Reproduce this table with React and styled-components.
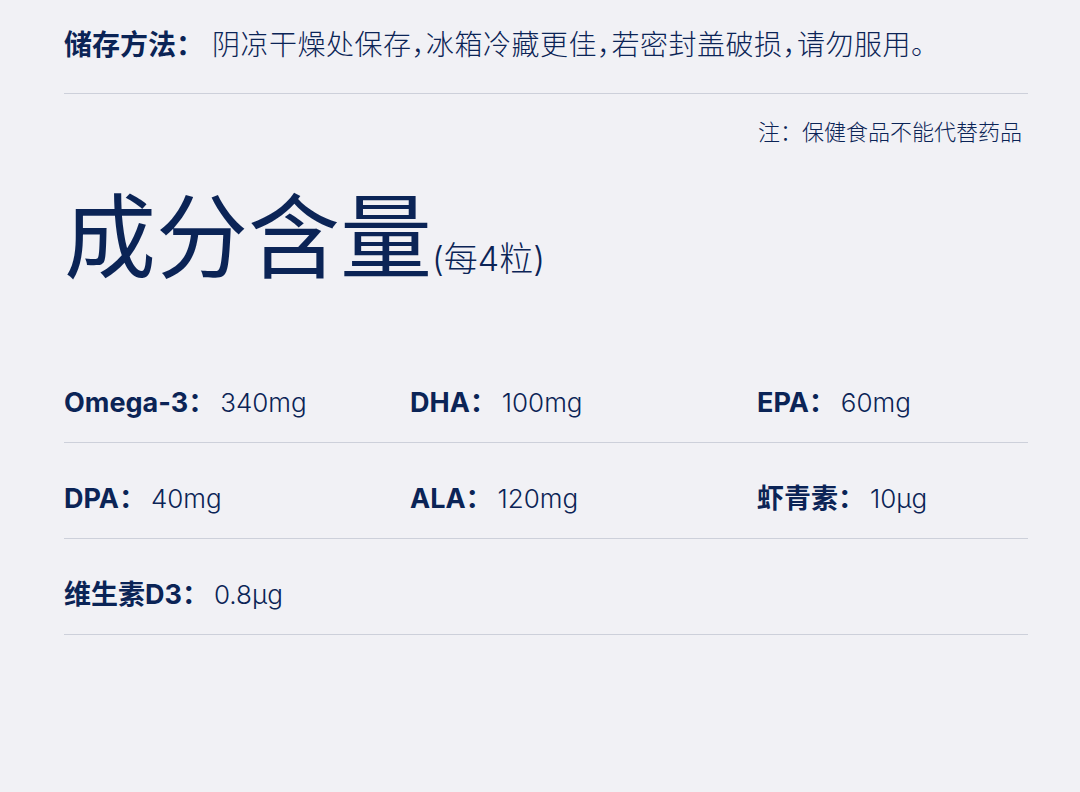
import React from "react";
import styled, { createGlobalStyle } from "styled-components";

const Global = createGlobalStyle`
  html, body { margin: 0; padding: 0; background: #f1f1f5; }
  body { font-family: Inter, "Noto Sans CJK SC", sans-serif; color: #0b2456; }
`;

const Page = styled.div`
  width: 1080px;
  min-height: 792px;
  box-sizing: border-box;
  padding: 0 52px 0 64px;
  background: #f1f1f5;
`;

const Storage = styled.div`
  display: flex;
  align-items: baseline;
  padding: 22px 0 29px;
  font-size: 28px;
  line-height: 42px;
  font-family: "Noto Sans CJK SC", sans-serif;
  border-bottom: 1px solid #cdd0da;
`;

const StorageLabel = styled.span`
  font-weight: 700;
  margin-right: 8px;
`;

const StorageText = styled.span`
  font-weight: 300;
  letter-spacing: 0.5px;
  font-feature-settings: "halt";
`;

const Note = styled.div`
  margin-top: 20px;
  text-align: right;
  font-size: 22px;
  line-height: 33px;
  font-weight: 300;
  font-family: "Noto Sans CJK SC", sans-serif;
  padding-right: 6px;
`;

const Title = styled.h1`
  margin: 38px 0 0;
  display: flex;
  align-items: baseline;
  font-weight: 400;
  font-size: 92px;
  line-height: 92px;
  font-family: "Noto Sans CJK SC", sans-serif;
`;

const TitleSub = styled.span`
  font-size: 34px;
  font-weight: 300;
  font-family: Inter, "Noto Sans CJK SC", sans-serif;
`;

const Table = styled.div`
  margin-top: 42px;
`;

const Row = styled.div`
  display: grid;
  grid-template-columns: 346px 347px 1fr;
  padding: 36px 0 20px;
  border-bottom: 1px solid #cdd0da;
`;

const Cell = styled.div`
  display: flex;
  align-items: baseline;
  font-size: 26px;
  line-height: 39px;
`;

const Label = styled.span`
  font-size: 27px;
  font-weight: 700;
  margin-right: 5px;
`;

const Value = styled.span`
  font-weight: 300;
`;

const rows = [
  [
    ["Omega-3：", "340mg"],
    ["DHA：", "100mg"],
    ["EPA：", "60mg"],
  ],
  [
    ["DPA：", "40mg"],
    ["ALA：", "120mg"],
    ["虾青素：", "10μg"],
  ],
  [["维生素D3：", "0.8μg"]],
];

export default function App() {
  return (
    <Page>
      <Global />
      <Storage>
        <StorageLabel>储存方法：</StorageLabel>
        <StorageText>阴凉干燥处保存，冰箱冷藏更佳，若密封盖破损，请勿服用。</StorageText>
      </Storage>
      <Note>注：保健食品不能代替药品</Note>
      <Title>
        成分含量<TitleSub>(每4粒)</TitleSub>
      </Title>
      <Table>
        {rows.map((r, i) => (
          <Row key={i}>
            {r.map(([l, v]) => (
              <Cell key={l}>
                <Label>{l}</Label>
                <Value>{v}</Value>
              </Cell>
            ))}
          </Row>
        ))}
      </Table>
    </Page>
  );
}
